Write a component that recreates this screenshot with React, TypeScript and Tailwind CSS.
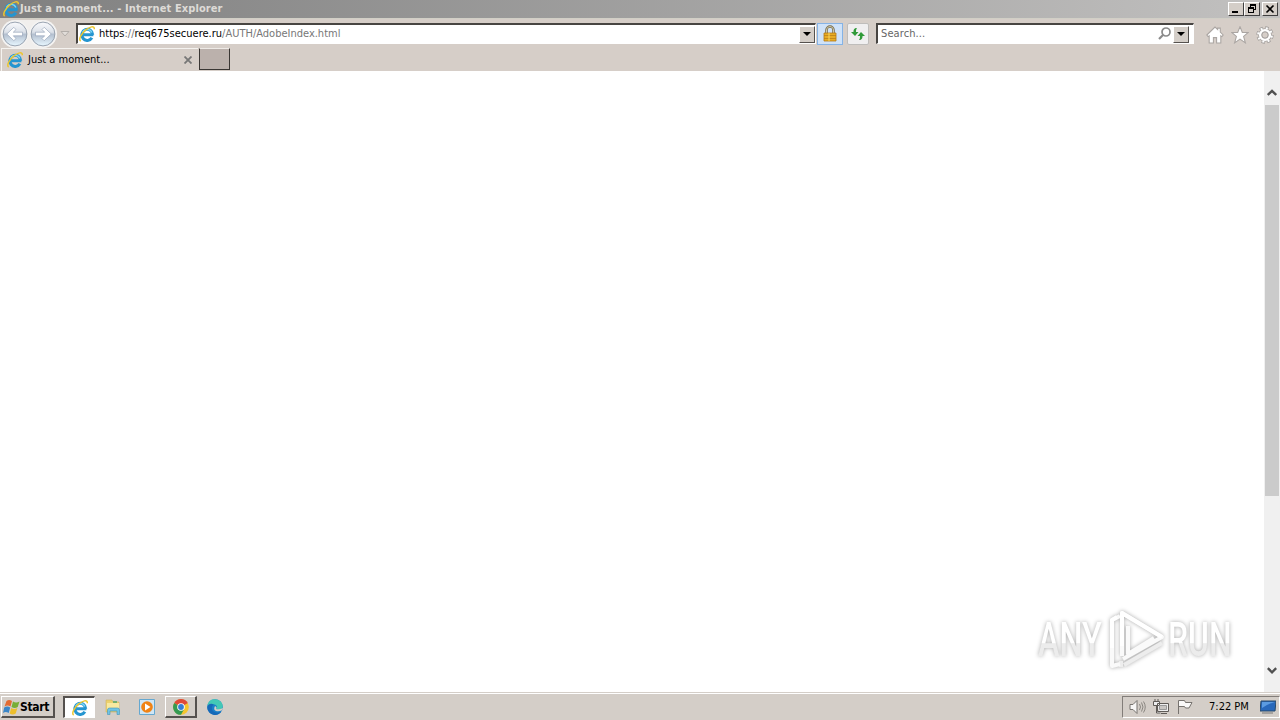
import type { ReactNode } from "react";

const face = "font-['DejaVu_Sans_Condensed','DejaVu_Sans',sans-serif] [font-stretch:condensed] whitespace-nowrap";

function IELogo({ className = "" }: { className?: string }) {
  return (
    <svg viewBox="0 0 16 16" className={"shrink-0 " + className} fill="none">
      <path d="M14.4 8.700H4.500M13.700 8.700A5.400 5.600 0 1 0 12.900 11.800" stroke="#2595d0" strokeWidth="3.100" />
      <path d="M13 6.500A5.300 5.500 0 0 0 3.500 6.500" stroke="#7fd6f4" strokeWidth="1.300" />
      <path d="M1.700 15C-.8 13.500 2.400 7.500 6.500 4.200 10.500.9 15.600-1 15.300 3.200" stroke="#ecc62f" strokeWidth="1.500" />
    </svg>
  );
}

function NavArrow({ flip = false }: { flip?: boolean }) {
  return (
    <svg viewBox="0 0 28 28" className="size-7 shrink-0">
      <defs>
        <linearGradient id={flip ? "navB" : "navA"} x1="0" y1="0" x2="0" y2="1">
          <stop stopColor="#fafbfd" />
          <stop offset=".42" stopColor="#dce1e9" />
          <stop offset=".52" stopColor="#b4c0d0" />
          <stop offset="1" stopColor="#e8f7ff" />
        </linearGradient>
      </defs>
      <circle cx="14" cy="14" r="13.700" fill="#f4f3f2" />
      <circle cx="14" cy="14" r="11.900" fill={flip ? "url(#navB)" : "url(#navA)"} stroke="#8f9aa8" strokeWidth=".9" />
      <path
        d="M5.800 14l7-6.700 2.200 2.200-2.700 2.700h9.200v3.600h-9.200l2.700 2.700-2.200 2.200z"
        transform={flip ? "translate(28 0) scale(-1 1)" : undefined}
        fill="#fff"
        stroke="#8d9cb4"
        strokeWidth=".6"
      />
    </svg>
  );
}

function DropButton() {
  return (
    <div className="flex h-[17px] w-4 shrink-0 items-center justify-center border border-t-white border-l-white border-r-[#55514e] border-b-[#55514e] bg-[#d4cec8]">
      <svg viewBox="0 0 8 4" className="h-1 w-2"><path d="M0 0h8L4 4z" fill="#000" /></svg>
    </div>
  );
}

function CaptionButton({ children }: { children: ReactNode }) {
  return (
    <div className="h-[14px] w-4 shrink-0 border border-t-white border-l-white border-r-[#404040] border-b-[#404040] bg-[#d4cec8]">
      <svg viewBox="0 0 14 12" className="h-3 w-[14px]" fill="none" stroke="#000" shapeRendering="crispEdges">{children}</svg>
    </div>
  );
}

function TitleBar() {
  return (
    <header className="flex h-[18px] shrink-0 items-center bg-linear-to-r from-[#808080] to-[#c2c1c0] pr-[2px] pl-[3px]">
      <IELogo className="size-4" />
      <span className={face + " ml-px flex-1 pt-px text-[11px] font-bold tracking-[0.1px] text-[#dedbd7]"}>Just a moment... - Internet Explorer</span>
      <CaptionButton><path d="M3 9h6" strokeWidth="2" /></CaptionButton>
      <CaptionButton><path d="M5 2h6M5 1h6M5.500 1v3M10.500 1v6M11 6.500H9M3 5h6M3 4.500h6M3.500 4v6M8.500 4v6M3 9.500h6" /></CaptionButton>
      <div className="w-[2px]" />
      <CaptionButton><path d="M3.500 2.500l7 7M10.500 2.500l-7 7" strokeWidth="1.600" shapeRendering="auto" /></CaptionButton>
    </header>
  );
}

function AddressRow() {
  return (
    <div className="flex h-[30px] shrink-0 items-center border-t border-[#d1cfc6] pl-px">
      <div className="flex rounded-full bg-[#f1efed]"><NavArrow /><NavArrow flip /></div>
      <svg viewBox="0 0 10 6" className="ml-[3px] h-[6px] w-[10px]"><path d="M1 .5h8L5 5z" fill="#e1ddd9" stroke="#b3aeaa" /></svg>
      <div className="ml-[6px] flex h-[21px] w-[740px] shrink-0 items-center border border-t-2 border-l-2 border-t-[#484542] border-l-[#484542] border-r-white border-b-white bg-white pl-px">
        <IELogo className="size-4" />
        <span className={face + " ml-1 flex-1 pt-px text-[11px] text-[#777]"}>
          <span className="text-black">https</span>://<span className="text-black">req675secuere.ru</span>/AUTH/AdobeIndex.html
        </span>
        <DropButton />
      </div>
      <div className="ml-px flex h-[22px] w-[26px] shrink-0 items-center justify-center border border-[#85b3e6] bg-[#cfe2f8]">
        <svg viewBox="0 0 16 18" className="h-[18px] w-4">
          <path d="M4.500 9V5a3.500 3.500 0 017 0v4" fill="none" stroke="#74694b" strokeWidth="2.500" />
          <path d="M4.500 9V5a3.500 3.500 0 017 0v4" fill="none" stroke="#cfc9a9" />
          <path d="M2 8h12v8H2z" fill="#e8ac24" stroke="#b57912" strokeWidth=".8" />
          <path d="M2 10.500h12M2 13.500h12" stroke="#b67b18" strokeWidth=".7" /><path d="M7 8v8" stroke="#f7d765" />
        </svg>
      </div>
      <div className="ml-1 flex h-[22px] w-[22px] shrink-0 items-center justify-center rounded-[2px] border border-[#bfbdbb] bg-[#f0eff0]">
        <svg viewBox="0 0 16 16" className="size-4" fill="#2f9a38">
          <path d="M7 2C4 2 3.500 4 3.500 6H1l4 4 3.500-4H6c0-2 .2-3 1-4z" /><path d="M9 14c3 0 3.500-2 3.500-4H15l-4-4-3.500 4H10c0 2-.2 3-1 4z" />
        </svg>
      </div>
      <div className="ml-[7px] flex h-[21px] w-[318px] shrink-0 items-center border border-t-2 border-l-2 border-t-[#484542] border-l-[#484542] border-r-white border-b-white bg-white pr-1 pl-[3px]">
        <span className={face + " flex-1 pt-px text-[11px] tracking-[0.1px] text-[#666]"}>Search...</span>
        <svg viewBox="0 0 16 16" className="size-4" fill="none" stroke="#8a8a8a"><circle cx="9" cy="6" r="4" strokeWidth="1.700" /><path d="M6 9l-4 4" strokeWidth="2.200" /></svg>
        <DropButton />
      </div>
      <div className="ml-[12px] flex items-center gap-[7px] pt-[2px]">
        <svg viewBox="0 0 17 17" className="size-[18px]" fill="#fff" stroke="#aaa5a2"><path d="M.8 8.500L8.500 1l2.500 2.300V2h2.500v3.800L16.200 8.500 15 10l-1-.7V16h-4v-5H7v5H3V9.300l-1 .7z" /></svg>
        <svg viewBox="0 0 17 17" className="size-[18px]" fill="#fff" stroke="#aaa5a2"><path d="M8.500.7l2.200 5.400h5.600l-4.400 3.700 1.700 6.100-5.100-3.600-5.100 3.600 1.700-6.100L.7 6.100h5.600z" /></svg>
        <svg viewBox="0 0 18 18" className="size-[18px]" fill="none">
          <circle cx="9" cy="9" r="6.900" stroke="#a39f9d" strokeWidth="3.600" strokeDasharray="3.200 2.219" />
          <circle cx="9" cy="9" r="5.200" stroke="#a39f9d" strokeWidth="3.200" />
          <circle cx="9" cy="9" r="6.800" stroke="#fff" strokeWidth="2.200" strokeDasharray="2 3.341" strokeDashoffset="-.6" />
          <circle cx="9" cy="9" r="4.800" stroke="#fff" strokeWidth="2.600" />
          <circle cx="9" cy="9" r="3.200" stroke="#a39f9d" strokeWidth="1" />
        </svg>
      </div>
    </div>
  );
}

function TabRow() {
  return (
    <div className="flex h-[23px] shrink-0 pl-px">
      <div className="flex h-[23px] w-[197px] items-center border-t border-l border-[#f5f3f0] pl-[5px]">
        <IELogo className="size-4" />
        <span className={face + " ml-[5px] flex-1 pt-px text-[11px] text-black"}>Just a moment...</span>
        <svg viewBox="0 0 8 8" className="mr-[6px] size-2" stroke="#777" strokeWidth="1.800"><path d="M.5.5l7 7M7.500.5l-7 7" /></svg>
      </div>
      <div className="ml-px h-[22px] w-[31px] border border-t-[#eeeae6] border-l-[#393633] border-r-[#393633] border-b-[#393633] bg-[#bbb1ac]" />
    </div>
  );
}

function Watermark() {
  const mark = "font-['Roboto','Liberation_Sans',sans-serif] text-[49px] leading-[60px] font-medium bg-linear-to-b from-white from-55% to-[#ececec] to-56% bg-clip-text text-transparent";
  return (
    <div className="absolute right-[47px] bottom-[20px] flex h-[64px] w-[195px] items-center drop-shadow-[0_0_2px_#aaa]">
      <div className="w-[70px] shrink-0"><div className={mark + " w-max origin-left scale-x-[.66]"}>ANY</div></div>
      <svg viewBox="0 0 58 64" className="h-16 w-[58px] shrink-0 overflow-visible" fill="none" strokeWidth="4" strokeLinejoin="round">
        <path d="M16 57l38-22M13 53v6" stroke="#ededed" />
        <path d="M14 48V5l40 24-39 22M12 8l-8 4v46l8-2M20 18v28l26-16" stroke="#fafafa" />
        <path d="M14 38V5l40 24M4 40V12l5-3" stroke="#fff" />
      </svg>
      <div className="ml-[2px] w-[65px] shrink-0"><div className={mark + " w-max origin-left scale-x-[.65]"}>RUN</div></div>
    </div>
  );
}

function Viewport() {
  return (
    <main className="relative flex min-h-0 flex-1 bg-white">
      <div className="flex-1" />
      <div className="flex w-4 flex-col items-center bg-[#f0f0f0] pt-[18px]">
        <svg viewBox="0 0 10 7" className="h-[7px] w-[10px]" fill="none" stroke="#505050" strokeWidth="2.400"><path d="M.8 6L5 1.900 9.200 6" /></svg>
        <div className="mt-[9px] h-[391px] w-[14px] bg-[#cbcbcb]" />
        <div className="flex-1" />
        <svg viewBox="0 0 10 7" className="mb-[18px] h-[7px] w-[10px]" fill="none" stroke="#505050" strokeWidth="2.400"><path d="M.8 1.200L5 5.300l4.200-4.100" /></svg>
      </div>
      <Watermark />
    </main>
  );
}

function Taskbar() {
  return (
    <footer className="flex h-[28px] shrink-0 items-center border-t border-[#d4cec8] bg-[#d4cec8] pt-px shadow-[inset_0_1px_0_#fff]">
      <div className="ml-px flex h-[22px] w-[54px] items-center border border-t-white border-l-white border-r-2 border-b-2 border-r-[#55514e] border-b-[#55514e] pl-px">
        <svg viewBox="0 0 17 16" className="h-4 w-[17px] shrink-0">
          <path d="M3.500 2q2.500-2 5.500 0L7.500 7.500q-3-2-6 0z" fill="#e36b32" /><path d="M10 2.500q3 2 6.500 0L14.700 8q-3 2-6.200 0z" fill="#77ae36" />
          <path d="M1.200 8.500q3-2 6 0L5.700 14q-3-2-5.700 0z" fill="#3b86c8" /><path d="M8.200 9q3 2 6.200 0l-1.700 5.500q-3 2-6 0z" fill="#edbe2c" />
        </svg>
        <span className={face + " text-[12px] font-bold tracking-[-0.300px] text-black"}>Start</span>
      </div>
      <div className="ml-[8px] flex h-[22px] w-[32px] items-center justify-center border border-t-2 border-l-2 border-t-[#55514e] border-l-[#55514e] border-r-white border-b-white bg-white"><IELogo className="size-4" /></div>
      <svg viewBox="0 0 16 16" className="ml-[10px] size-4">
        <path d="M1 3V1h6l1 2h6v10H1z" fill="#ecd16e" stroke="#d0b660" strokeWidth=".6" /><path d="M2 4h12v6H2z" fill="#f8e9a0" /><path d="M8 2h4v2H8z" fill="#74af72" />
        <path d="M2.500 15.500V11q0-2 2-2h8q2 0 2 2v4.500h-2.500V12H5v3.500z" fill="#70c4e4" stroke="#4594b8" strokeWidth=".6" />
      </svg>
      <svg viewBox="0 0 16 16" className="ml-[18px] size-4"><path d="M.5.5h15v15H.5z" fill="#cfe6f5" stroke="#65a8d0" /><circle cx="8" cy="8" r="5.800" fill="#f08315" /><path d="M6 4.500l5.500 3.500L6 11.500z" fill="#fff" /></svg>
      <div className="ml-[10px] flex h-[22px] w-[32px] items-center justify-center border border-t-white border-l-white border-r-2 border-b-2 border-r-[#55514e] border-b-[#55514e]">
        <svg viewBox="0 0 16 16" className="size-4"><circle cx="8" cy="8" r="7.800" fill="#f5c52d" /><path d="M8 8L1.200 4A7.800 7.800 0 0114.800 4z" fill="#df4938" /><path d="M1.200 4A7.800 7.800 0 008 15.800L11.200 10 8 8z" fill="#359a52" /><circle cx="8" cy="8" r="3.800" fill="#fff" /><circle cx="8" cy="8" r="2.900" fill="#367dd4" /></svg>
      </div>
      <svg viewBox="0 0 16 16" className="ml-[10px] size-4"><circle cx="8" cy="8" r="7.800" fill="#197fc9" /><path d="M.5 7C1 2 4 .2 8 .2c5 0 8 4 7.700 7.300C15.500 11 11 11 9 10c2-2 .6-4.500-2-4.500C4 5.500 1.500 6 .5 7z" fill="#43c8b6" /><path d="M.3 9C.3 5 4 4 7 5.500 4 7 4 11 7.500 13c3 1.500 5 .3 7-.5A7.800 7.800 0 01.3 9z" fill="#1769b8" /><path d="M8 7q-2 4 1 5 3 1 6-.8L16 9q-4 2-7 1 1.500-1.500-1-3z" fill="#d4cec8" /></svg>
      <div className="flex-1" />
      <div className="flex h-[22px] w-[158px] items-center border border-t-[#827d79] border-l-[#827d79] border-r-white border-b-white pl-[6px]">
        <svg viewBox="0 0 17 16" className="h-4 w-[17px]" fill="none" stroke="#77736f"><path d="M1 5.500h3l4-4v13l-4-4H1z" fill="#f7f6f5" /><path d="M10.500 5q2 3 0 6M12.500 3.500q3 4.500 0 9M14.500 2.500q3.500 5.500 0 11" strokeWidth=".8" /></svg>
        <svg viewBox="0 0 17 16" className="ml-[7px] h-4 w-[17px]" fill="#eee" stroke="#5f5b57"><path d="M4.500 4.500h11v8h-11zM8 14.500h6M.5 2.500h6v4h-6zM2 0v2M5 0v2M3.500 7v7h4" /><path d="M6.500 6.500h7v4h-7z" fill="#c9c6c3" stroke="#999" /></svg>
        <svg viewBox="0 0 17 16" className="ml-[7px] h-4 w-[17px]" fill="#faf9f8" stroke="#77736f"><path d="M1.500 15V1.500h6l1 2h6.500L12 9H8.500l-1-1.500H2" /></svg>
        <span className={face + " ml-[15px] pt-px text-[11px] text-black"}>7:22 PM</span>
        <svg viewBox="0 0 16 16" className="ml-[11px] size-4 shrink-0"><path d="M1 2h15l-1 10H0z" fill="#2868bb" stroke="#294968" /><path d="M2 3h13q-5 1-13 6z" fill="#5b9be1" /><path d="M2 14h11" stroke="#777" /></svg>
      </div>
    </footer>
  );
}

export default function App() {
  return (
    <div className="flex h-[720px] w-[1280px] flex-col overflow-hidden bg-[#d6cec8]">
      <TitleBar /><AddressRow /><TabRow /><Viewport /><Taskbar />
    </div>
  );
}
